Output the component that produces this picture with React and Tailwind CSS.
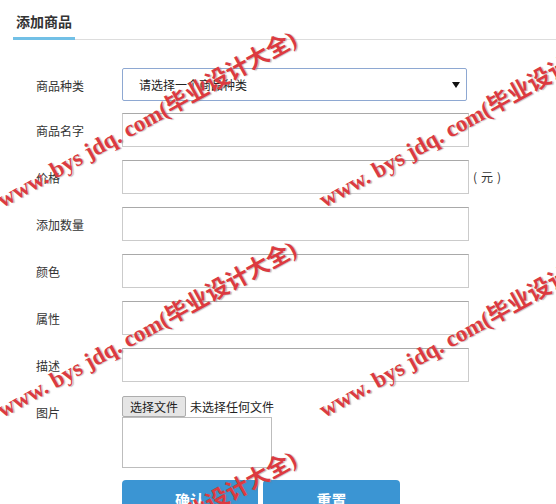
import React from "react";

const font = { fontFamily: '"Noto Sans CJK SC", "Microsoft YaHei", sans-serif' };

function Field({ label, children, tight }) {
  return (
    <div className={`flex items-center ${tight ? "mb-[12px]" : "mb-[13px]"}`}>
      <div className="w-[122px] shrink-0 pl-[36px] text-[12px] leading-[16px] text-[#333] pt-[2px]">{label}</div>
      {children}
    </div>
  );
}

function Input() {
  return <div className="w-[347px] h-[34px] border border-[#cbcbcb] border-t-[#a9a9a9] bg-white" />;
}

function Watermark({ className }) {
  return (
    <div
      className={`absolute whitespace-nowrap origin-bottom-left -rotate-[29deg] text-[23px] leading-[28px] font-bold text-[#dc3a40] pointer-events-none [text-shadow:1px_1px_1px_rgba(120,120,120,0.5)] ${className}`}
      style={{ fontFamily: '"Liberation Serif", "Noto Sans CJK SC", serif' }}
    >
      www. bys jdq. com(毕业设计大全)
    </div>
  );
}

export default function App() {
  return (
    <div className="relative w-[556px] h-[504px] overflow-hidden bg-white text-[#333]" style={font}>
      <div className="ml-[13px] border-b border-[#dddddd] flex">
        <div className="-mb-px px-[3px] pt-[11px] pb-[6px] leading-[20px] text-[14px] font-bold text-[#333] border-b-[3px] border-[#72c0e6]">
          添加商品
        </div>
      </div>

      <div className="pt-[28px]">
        <Field label="商品种类" tight>
          <div className="w-[345px] h-[33px] border border-[#8ea8d2] rounded-[2px] bg-white flex items-center justify-between pl-[16px] pr-[6px]">
            <span className="text-[12px] leading-[16px] text-[#222]">请选择一个商品种类</span>
            <svg width="8" height="6" viewBox="0 0 8 6"><path d="M0 0h8L4 6z" fill="#111" /></svg>
          </div>
        </Field>
        <Field label="商品名字"><Input /></Field>
        <Field label="价格">
          <Input />
          <span className="ml-[4px] text-[12px] leading-[16px] text-[#333]">
            (<span className="mx-[4px]">元</span>)
          </span>
        </Field>
        <Field label="添加数量"><Input /></Field>
        <Field label="颜色"><Input /></Field>
        <Field label="属性"><Input /></Field>
        <Field label="描述"><Input /></Field>

        <div className="flex mt-[14px]">
          <div className="w-[122px] shrink-0 pl-[36px] pt-[9px] text-[12px] leading-[16px] text-[#333]">图片</div>
          <div className="flex flex-col">
            <div className="flex items-center">
              <div className="w-[64px] h-[21px] border border-[#adadad] bg-[#e5e5e5] rounded-[2px] flex items-center justify-center text-[12px] text-[#222]">
                选择文件
              </div>
              <span className="ml-[4px] text-[12px] text-[#222]">未选择任何文件</span>
            </div>
            <div className="w-[150px] h-[51px] border border-[#bdbdbd] bg-white" />
          </div>
        </div>

        <div className="flex gap-[5px] ml-[122px] mt-[12px]">
          <div className="w-[136px] h-[40px] rounded-[4px] bg-[#3b95d3] flex items-center justify-center text-white font-bold text-[15px]">
            确认
          </div>
          <div className="w-[137px] h-[40px] rounded-[4px] bg-[#3b95d3] flex items-center justify-center text-white font-bold text-[15px]">
            重置
          </div>
        </div>
      </div>

      <Watermark className="left-[6px] top-[186px]" />
      <Watermark className="left-[328px] top-[186px]" />
      <Watermark className="left-[6px] top-[396px]" />
      <Watermark className="left-[328px] top-[396px]" />
      <Watermark className="left-[6px] top-[606px]" />
    </div>
  );
}
